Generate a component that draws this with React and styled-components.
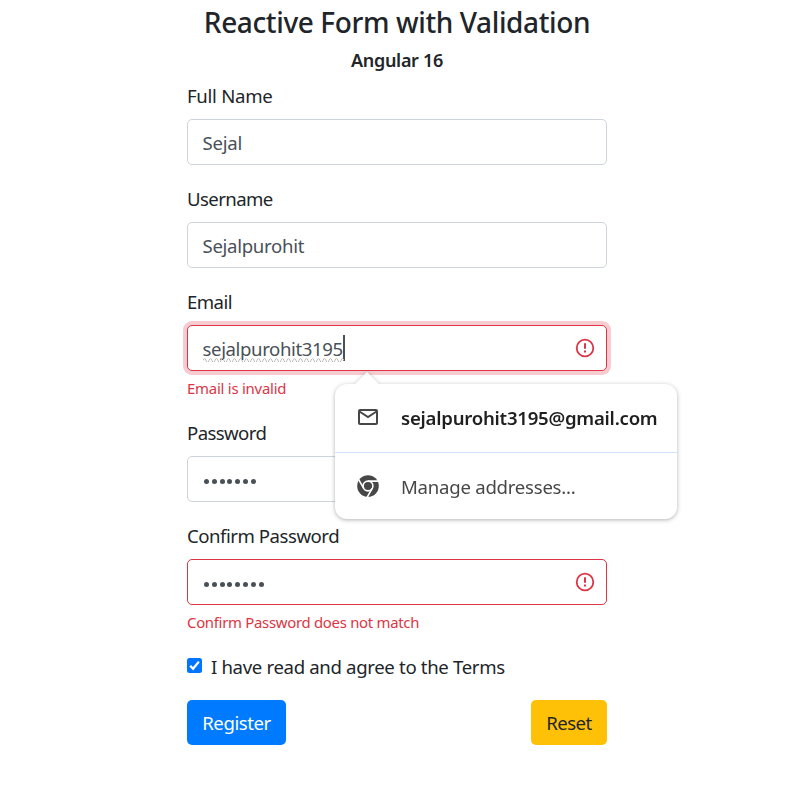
import React from "react";
import styled, { createGlobalStyle } from "styled-components";

const Global = createGlobalStyle`
  *, *::before, *::after { box-sizing: border-box; }
  html, body { margin: 0; background: #fff; }
  body {
    height: 787px;
    overflow: hidden;
    font-family: "Noto Sans", "Open Sans", sans-serif;
    font-size: 18.6px;
    line-height: 29px;
    color: #212529;
  }
`;

const Page = styled.main`
  width: 420px;
  margin: 0 auto;
  padding-top: 5px;
  display: flex;
  flex-direction: column;
`;

const Fit = styled.span`
  white-space: nowrap;
  letter-spacing: ${(p) => p.$ls || 0}px;
`;

const Title = styled.h1`
  margin: 0;
  height: 42px;
  font-size: 28px;
  font-weight: 500;
  line-height: 35px;
  text-align: center;
`;

const Subtitle = styled.h2`
  margin: 0;
  height: 34px;
  font-size: 18px;
  font-weight: 600;
  line-height: 27px;
  text-align: center;
`;

const Field = styled.div`
  display: flex;
  flex-direction: column;
  margin-bottom: 19px;
`;

const Label = styled.label`
  height: 38px;
  line-height: 29px;
`;

const Control = styled.div`
  position: relative;
  display: flex;
  align-items: center;
  justify-content: space-between;
  height: 46px;
  padding: 1px 11px 0 14.5px;
  border: 1px solid ${(p) => (p.$invalid ? "#dc3545" : "#ced4da")};
  border-radius: 5px;
  background: #fff;
  color: #495057;
  box-shadow: ${(p) => (p.$focused ? "0 0 0 4px rgba(220, 53, 69, 0.25)" : "none")};
`;

const Typed = styled.span`
  display: flex;
  align-items: center;
  position: relative;
`;

const Caret = styled.span`
  width: 2px;
  height: 26px;
  margin-top: -2px;
  background: #495057;
`;

const Squiggle = styled.svg`
  position: absolute;
  left: 0;
  bottom: 1px;
`;

const Dots = styled.span`
  display: flex;
  gap: 2.8px;
  padding: 3px 0 0 1.5px;
`;

const Dot = styled.span`
  width: 5px;
  height: 5px;
  border-radius: 50%;
  background: #495057;
`;

const ErrorText = styled.div`
  height: 23px;
  margin-top: 5px;
  font-size: 14.9px;
  line-height: 25px;
  color: #dc3545;
`;

const AlertSvg = styled.svg`
  display: block;
  margin-top: -1px;
`;

const Terms = styled.label`
  display: flex;
  gap: 9px;
  height: 29px;
  line-height: 29px;
  margin-bottom: 19px;
`;

const Box = styled.svg`
  margin-top: 6px;
`;

const Actions = styled.div`
  display: flex;
  justify-content: space-between;
`;

const Button = styled.button`
  width: ${(p) => p.$w}px;
  height: 45px;
  padding: 0;
  border: 0;
  border-radius: 5px;
  font: inherit;
  color: ${(p) => p.$fg};
  background: ${(p) => p.$bg};
`;

const Popup = styled.div`
  position: absolute;
  z-index: 2;
  left: 147px;
  top: 58px;
  width: 342px;
  height: 135px;
  border-radius: 12px;
  background: #fff;
  filter: drop-shadow(0 1px 2px rgba(0, 0, 0, 0.3));
`;

const Arrow = styled.svg`
  position: absolute;
  left: 19px;
  top: -12px;
`;

const Option = styled.div`
  display: flex;
  align-items: center;
  height: ${(p) => p.$h}px;
  padding: 0 0 ${(p) => p.$pb || 0}px 22px;
  gap: 22px;
  color: ${(p) => p.$color};
  font-weight: ${(p) => p.$weight};
  border-bottom: ${(p) => (p.$line ? "1px solid #d3e3fd" : "0")};
`;

const AlertIcon = () => (
  <AlertSvg width="20" height="20" viewBox="0 0 20 20" fill="none" stroke="#dc3545">
    <circle cx="10" cy="10" r="8.3" strokeWidth="1.8" />
    <path d="M10 5.2v5.6M10 12.5v2" strokeWidth="2" />
  </AlertSvg>
);

const MailIcon = () => (
  <svg width="22" height="22" viewBox="0 0 22 22" fill="none" stroke="#474747" strokeWidth="2">
    <rect x="2" y="4" width="18" height="14" rx="1" />
    <path d="M2.5 5.5 11 11l8.5-5.5" />
  </svg>
);

const ChromeIcon = () => (
  <svg width="22" height="22" viewBox="0 0 22 22">
    <circle cx="11" cy="11" r="10.8" fill="#474747" />
    <g fill="none" stroke="#fff" strokeWidth="1.6">
      <circle cx="11" cy="11" r="4.9" />
      <path d="M11 6.1h10.5M6.76 13.45 1.5 4.35M15.24 13.45 9.99 22.5" />
    </g>
  </svg>
);

const Password = ({ count }) => (
  <Dots>{Array.from({ length: count }, (_, i) => <Dot key={i} />)}</Dots>
);

const wave = "M0 3.5" + Array.from({ length: 24 }, () => "q1.5 -4 3 0t3 0").join("");

export default function App() {
  return (
    <>
      <Global />
      <Page>
        <Title><Fit $ls={-0.38}>Reactive Form with Validation</Fit></Title>
        <Subtitle><Fit $ls={-0.3}>Angular 16</Fit></Subtitle>
        <Field>
          <Label><Fit $ls={-0.28}>Full Name</Fit></Label>
          <Control><Fit $ls={-0.25}>Sejal</Fit></Control>
        </Field>
        <Field>
          <Label><Fit $ls={-0.6}>Username</Fit></Label>
          <Control><Fit $ls={-0.3}>Sejalpurohit</Fit></Control>
        </Field>
        <Field>
          <Label><Fit $ls={-0.55}>Email</Fit></Label>
          <Control $invalid $focused>
            <Typed>
              <Fit $ls={-0.38}>sejalpurohit3195</Fit>
              <Caret />
              <Squiggle width="141" height="5" fill="none" stroke="#b9b9b9">
                <path d={wave} />
              </Squiggle>
            </Typed>
            <AlertIcon />
            <Popup>
              <Arrow width="26" height="13" viewBox="0 0 26 13" fill="#fff">
                <path d="M0 13 13 0l13 13z" />
              </Arrow>
              <Option $h={69} $pb={2} $color="#1f1f1f" $weight={600} $line>
                <MailIcon />
                <Fit $ls={-0.24}>sejalpurohit3195@gmail.com</Fit>
              </Option>
              <Option $h={66} $color="#474747" $weight={400}>
                <ChromeIcon />
                <Fit $ls={-0.25}>Manage addresses...</Fit>
              </Option>
            </Popup>
          </Control>
          <ErrorText><Fit $ls={-0.22}>Email is invalid</Fit></ErrorText>
        </Field>
        <Field>
          <Label><Fit $ls={-0.6}>Password</Fit></Label>
          <Control><Password count={7} /></Control>
        </Field>
        <Field>
          <Label><Fit $ls={-0.47}>Confirm Password</Fit></Label>
          <Control $invalid>
            <Password count={8} />
            <AlertIcon />
          </Control>
          <ErrorText><Fit $ls={-0.28}>Confirm Password does not match</Fit></ErrorText>
        </Field>
        <Terms>
          <Box width="15" height="15" viewBox="0 0 15 15">
            <rect width="15" height="15" rx="2.5" fill="#0075ff" />
            <path d="m3.2 7.8 2.9 3L11.9 3.6" fill="none" stroke="#fff" strokeWidth="2.3" />
          </Box>
          <Fit $ls={-0.34}>I have read and agree to the Terms</Fit>
        </Terms>
        <Actions>
          <Button $w={99} $fg="#fff" $bg="#007bff"><Fit $ls={-0.45}>Register</Fit></Button>
          <Button $w={76} $fg="#212529" $bg="#ffc107"><Fit $ls={-0.5}>Reset</Fit></Button>
        </Actions>
      </Page>
    </>
  );
}
